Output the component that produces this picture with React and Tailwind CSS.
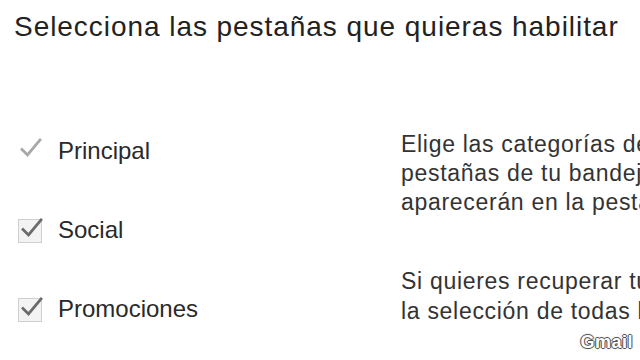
import React from 'react';

const Check = ({ muted }) => (
  <svg viewBox="0 0 24 24" className="w-[24px] h-[24px]" fill="none">
    <path
      d="M4 12.5 L9.5 18 L22 3"
      stroke={muted ? '#a8a8a8' : '#6b6b6b'}
      strokeWidth="2.8"
      strokeLinecap="square"
    />
  </svg>
);

const TabOption = ({ label, boxed }) => (
  <div className="flex items-center h-[30px]">
    <div
      className={
        boxed
          ? 'relative w-[24px] h-[24px] border border-[#cfcfcf] bg-[#f3f3f3]'
          : 'relative w-[24px] h-[24px]'
      }
    >
      <div className="absolute -top-[3px] left-0">
        <Check muted={!boxed} />
      </div>
    </div>
    <span className="ml-[16px] -mt-[3px] text-[24px] text-[#2a2a2a]">{label}</span>
  </div>
);

export default function App() {
  const tabs = [
    { label: 'Principal', boxed: false },
    { label: 'Social', boxed: true },
    { label: 'Promociones', boxed: true }
  ];

  return (
    <div
      className="relative w-[640px] h-[360px] overflow-hidden bg-white"
      style={{ fontFamily: '"Liberation Sans", Arial, sans-serif' }}
    >
      {/* Title */}
      <h1 className="pl-[14px] pt-[10px] text-[28px] leading-[34px] tracking-[0.95px] text-[#222] whitespace-nowrap">
        Selecciona las pestañas que quieras habilitar
      </h1>

      <div className="flex mt-[93px]">
        {/* Checkboxes */}
        <div className="flex flex-col gap-[49px] pl-[18px] w-[401px] shrink-0">
          {tabs.map((t) => (
            <TabOption key={t.label} label={t.label} boxed={t.boxed} />
          ))}
        </div>

        {/* Help text */}
        <div className="-mt-[7px] text-[23px] leading-[29px] tracking-[0.7px] text-[#333] whitespace-nowrap">
          <p>Elige las categorías de mensajes que quieras mostrar</p>
          <p>pestañas de tu bandeja de entrada. Los demás mensajes</p>
          <p>aparecerán en la pestaña Principal.</p>
          <p className="mt-[49px] leading-[30px]">Si quieres recuperar tu bandeja de entrada anterior</p>
          <p className="leading-[30px]">la selección de todas las pestañas.</p>
        </div>
      </div>

      {/* Watermark */}
      <span className="absolute right-[7px] bottom-[4px] text-[18px] font-bold tracking-[0.5px] text-white [text-shadow:1px_0_0_#555,-1px_0_0_#555,0_1px_0_#555,0_-1px_0_#555,0_0_2px_#222]">
        Gmail
      </span>
    </div>
  );
}
